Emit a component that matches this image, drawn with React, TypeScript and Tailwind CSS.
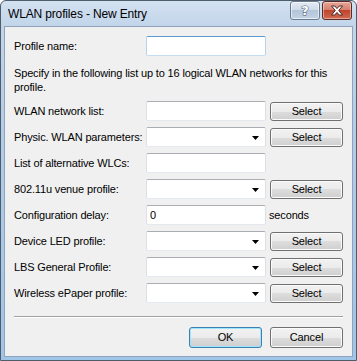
import React from "react";

const font = "font-['Tahoma','Liberation_Sans',sans-serif]";

function Arrow() {
  return (
    <svg width="7" height="4" viewBox="0 0 7 4" className="absolute right-[6px] top-[8px]">
      <path d="M0 0H7L3.5 4Z" fill="#000" />
    </svg>
  );
}

function Field({ combo, value, focus }: { combo?: boolean; value?: string; focus?: boolean }) {
  return (
    <div
      className={
        "relative h-[20px] w-[120px] border bg-white rounded-[2px] flex items-center pl-[3px] " +
        (focus
          ? "border-t-[#5d9ad2] border-x-[#b6d2ec] border-b-[#c3dcf1]"
          : "border-t-[#abadb3] border-x-[#dbdfe6] border-b-[#e3e9ef]")
      }
    >
      {value && <span className="text-[11px] leading-none text-black">{value}</span>}
      {combo && <Arrow />}
    </div>
  );
}

function Btn({ children, def, w = "w-[73px]", h = "h-[19px]" }: { children: React.ReactNode; def?: boolean; w?: string; h?: string }) {
  return (
    <div
      className={
        w +
        " " +
        h +
        " rounded-[3px] border flex items-center justify-center text-[11px] tracking-[-0.15px] text-black bg-[linear-gradient(to_bottom,#f2f2f2_0%,#ebebeb_50%,#dddddd_50%,#cfcfcf_100%)] " +
        (def
          ? "border-[#3c7fb1] shadow-[inset_0_0_0_1px_#9ee4fb]"
          : "border-[#707070] shadow-[inset_0_0_0_1px_#fbfbfb]")
      }
    >
      {children}
    </div>
  );
}

type Kind = "text" | "textSelect" | "comboSelect" | "seconds";

function Row({ label, kind }: { label: string; kind: Kind }) {
  return (
    <div className="flex items-center h-[20px]">
      <div className="w-[132px] text-[11px] tracking-[-0.15px] text-black whitespace-nowrap">{label}</div>
      {kind === "seconds" ? <Field value="0" /> : <Field combo={kind === "comboSelect"} />}
      {(kind === "textSelect" || kind === "comboSelect") && (
        <div className="ml-[4px]">
          <Btn>Select</Btn>
        </div>
      )}
      {kind === "seconds" && <div className="ml-[3px] text-[11px] tracking-[-0.15px] text-black">seconds</div>}
    </div>
  );
}

export default function App() {
  const rows: { label: string; kind: Kind }[] = [
    { label: "WLAN network list:", kind: "textSelect" },
    { label: "Physic. WLAN parameters:", kind: "comboSelect" },
    { label: "List of alternative WLCs:", kind: "text" },
    { label: "802.11u venue profile:", kind: "comboSelect" },
    { label: "Configuration delay:", kind: "seconds" },
    { label: "Device LED profile:", kind: "comboSelect" },
    { label: "LBS General Profile:", kind: "comboSelect" },
    { label: "Wireless ePaper profile:", kind: "comboSelect" },
  ];
  return (
    <div className={"w-[357px] h-[361px] bg-white " + font}>
      <div className="w-full h-full flex flex-col rounded-t-[6px] border border-[#4e5c6c] bg-[linear-gradient(to_bottom,#d4e2f1_0px,#c2d5ea_24px,#b4cde8_120px,#9fc5e8_100%)]">
        {/* title bar */}
        <div className="h-[25px] flex items-start relative">
          <div className="ml-[7px] mt-[6px] text-[12px] tracking-[-0.15px] leading-[15px] text-black font-['Liberation_Sans',sans-serif]">
            WLAN profiles - New Entry
          </div>
          <div className="ml-auto mr-[4px] mt-[0px] flex gap-[2px]">
            <div className="w-[30px] h-[19px] rounded-[3px] border border-[#6b7a8c] bg-[linear-gradient(to_bottom,#e3ebf4_0%,#cfdbe9_45%,#b3c5d9_50%,#c2d3e5_100%)] shadow-[inset_0_0_0_1px_rgba(255,255,255,0.6)] flex items-center justify-center">
              <span className="text-[13px] font-bold leading-none text-white [-webkit-text-stroke:1px_#44546a] [paint-order:stroke_fill] font-['DejaVu_Sans',sans-serif]">?</span>
            </div>
            <div className="w-[30px] h-[19px] rounded-[3px] border border-[#5c2a24] bg-[linear-gradient(to_bottom,#e7a699_0%,#d6806f_45%,#c0442f_50%,#d06a50_100%)] shadow-[inset_0_0_0_1px_rgba(255,230,220,0.5)] flex items-center justify-center">
              <svg width="14" height="11" viewBox="0 0 14 11">
                <path
                  d="M1.5 1H4.8L7 3.6L9.2 1H12.5L8.7 5.5L12.5 10H9.2L7 7.4L4.8 10H1.5L5.3 5.5Z"
                  fill="#fff"
                  stroke="#4a2a26"
                  strokeWidth="1"
                  strokeLinejoin="round"
                />
              </svg>
            </div>
          </div>
        </div>
        {/* client */}
        <div className="flex-1 mx-[3px] mb-[3px] border border-[#8fa3bb] bg-[#f0f0f0] px-[9px] pt-[9px] flex flex-col">
          <div className="flex items-center h-[20px]">
            <div className="w-[132px] text-[11px] tracking-[-0.15px] text-black">Profile name:</div>
            <Field focus />
          </div>
          <div className="mt-[10px] text-[11px] tracking-[-0.15px] leading-[14px] text-black">
            Specify in the following list up to 16 logical WLAN networks for this profile.
          </div>
          <div className="mt-[7px] flex flex-col gap-[6px]">
            {rows.map((r) => (
              <Row key={r.label} label={r.label} kind={r.kind} />
            ))}
          </div>
          <div className="mt-[13px] h-[2px] border-t border-t-[#a0a0a0] border-b border-b-white" />
          <div className="mt-[9px] flex justify-end gap-[8px]">
            <Btn def h="h-[21px]">OK</Btn>
            <Btn h="h-[21px]">Cancel</Btn>
          </div>
        </div>
      </div>
    </div>
  );
}
